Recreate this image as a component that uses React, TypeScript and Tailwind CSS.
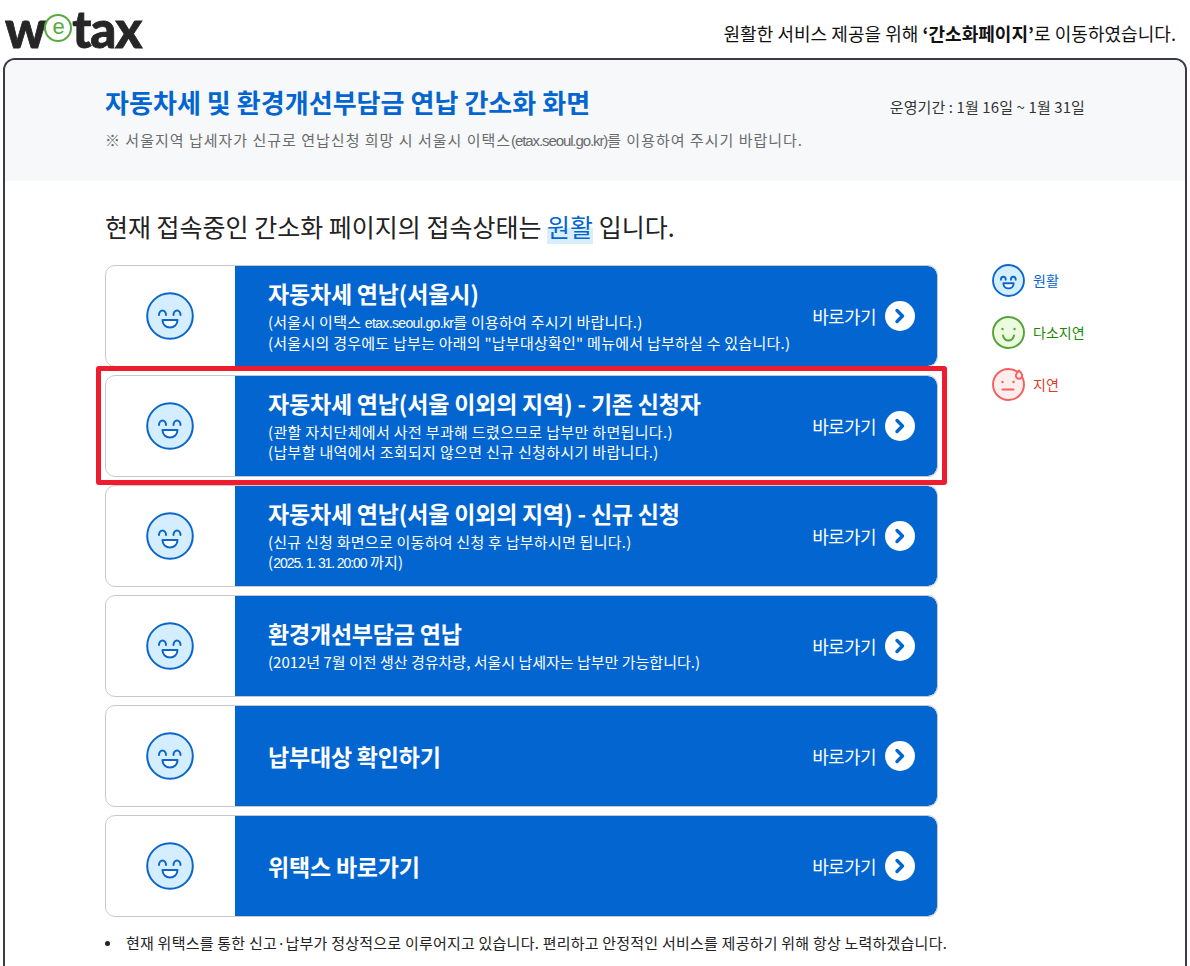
import React from "react";

const FONT = "font-['Noto_Sans_CJK_KR','Noto_Sans',sans-serif]";

function Smile({ size = 48 }: { size?: number }) {
  const sw = size < 40 ? 2.700 : 2;
  return (
    <svg width={size} height={size} viewBox="0 0 48 48" fill="none">
      <circle cx="24" cy="24" r={size < 40 ? 22.500 : 22.800} fill="#d4eeff" stroke="#0a66cc" strokeWidth={sw} />
      <path d="M13 23c0-2.500 1.500-4.500 3.500-4.500s3.500 2 3.500 4.500M27.500 23c0-2.500 1.500-4.500 3.500-4.500s3.500 2 3.500 4.500" stroke="#0a66cc" strokeWidth={sw} strokeLinecap="round" />
      <path d="M16.500 28h15c0 4.500-3.300 7.500-7.500 7.500s-7.500-3-7.500-7.500z" fill="#fff" stroke="#0a66cc" strokeWidth={sw} strokeLinejoin="round" />
    </svg>
  );
}

function Mild() {
  return (
    <svg width="33" height="33" viewBox="0 0 33 33" fill="none">
      <circle cx="16.500" cy="16.500" r="15.500" fill="#ecfbdf" stroke="#52a436" strokeWidth="1.900" />
      <circle cx="10.500" cy="13" r="1.200" fill="#52a436" />
      <circle cx="22.500" cy="13" r="1.200" fill="#52a436" />
      <path d="M11 19.500c.8 3.500 2.800 5 5.500 5s4.700-1.500 5.500-5" stroke="#52a436" strokeWidth="1.900" strokeLinecap="round" />
    </svg>
  );
}

function Delay() {
  return (
    <svg width="33" height="33" viewBox="0 0 33 33" fill="none">
      <circle cx="16.500" cy="16.500" r="15.500" fill="#ffecec" stroke="#f26060" strokeWidth="1.900" />
      <circle cx="10.500" cy="14" r="1.200" fill="#f26060" />
      <circle cx="21.500" cy="14" r="1.200" fill="#f26060" />
      <path d="M10.500 21.500h11" stroke="#f26060" strokeWidth="1.900" strokeLinecap="round" />
      <path d="M27 2.500c2 2 3.200 3.300 3.200 5a3.200 3.200 0 0 1-6.400 0c0-1.700 1.200-3 3.200-5z" fill="#ffecec" stroke="#f26060" strokeWidth="1.900" strokeLinejoin="round" />
    </svg>
  );
}

function Lat({ children, className = "tracking-[-0.65px]" }: { children: React.ReactNode; className?: string }) {
  return <span className={`font-['Liberation_Sans'] text-[14px] ${className}`}>{children}</span>;
}

function Row({ title, lines }: { title: string; lines: React.ReactNode[] }) {
  return (
    <a className="flex h-[102px] rounded-[10px] overflow-hidden bg-white border border-[#c9c9c9]">
      <div className="w-[129px] shrink-0 flex items-center justify-center pr-[2px]">
        <Smile />
      </div>
      <div className="flex-1 flex items-center bg-[#0366d0] text-white pl-[33px] pr-[22px] rounded-r-[9px]">
        <div className="flex-1 min-w-0">
          <div className={`text-[23px] leading-[30px] font-bold tracking-[-0.2px] ${lines.length ? "-translate-y-[2px] mb-[2px]" : ""}`}>{title}</div>
          {lines.map((l, i) => (
            <div key={i} className="text-[15px] leading-[20px] tracking-[0.25px] whitespace-nowrap">{l}</div>
          ))}
        </div>
        <div className="flex items-center gap-[9px] shrink-0">
          <span className="text-[18px] tracking-[-0.6px]">바로가기</span>
          <span className="w-[30px] h-[30px] rounded-full bg-white flex items-center justify-center">
            <svg width="14" height="16" viewBox="0 0 14 16" fill="none">
              <path d="M4 2.500 9.500 8 4 13.500" stroke="#0366d0" strokeWidth="3.400" strokeLinecap="round" strokeLinejoin="round" />
            </svg>
          </span>
        </div>
      </div>
    </a>
  );
}

const rows: { title: string; lines: React.ReactNode[] }[] = [
  { title: "자동차세 연납(서울시)", lines: [<>(서울시 이택스 <Lat>etax.seoul.go.kr</Lat>를 이용하여 주시기 바랍니다.)</>, "(서울시의 경우에도 납부는 아래의 \"납부대상확인\" 메뉴에서 납부하실 수 있습니다.)"] },
  { title: "자동차세 연납(서울 이외의 지역) - 기존 신청자", lines: [<span className="tracking-[0.33px]">(관할 자치단체에서 사전 부과해 드렸으므로 납부만 하면됩니다.)</span>, <span className="tracking-[0.33px]">(납부할 내역에서 조회되지 않으면 신규 신청하시기 바랍니다.)</span>] },
  { title: "자동차세 연납(서울 이외의 지역) - 신규 신청", lines: ["(신규 신청 화면으로 이동하여 신청 후 납부하시면 됩니다.)", <>(<Lat className="tracking-[-1.1px]">2025. 1. 31. 20:00</Lat> 까지)</>] },
  { title: "환경개선부담금 연납", lines: [<span className="tracking-[0px]">(2012년 7월 이전 생산 경유차량, 서울시 납세자는 납부만 가능합니다.)</span>] },
  { title: "납부대상 확인하기", lines: [] },
  { title: "위택스 바로가기", lines: [] },
];

export default function App() {
  return (
    <div className={`relative h-[966px] w-[1190px] overflow-hidden bg-white text-[#111] ${FONT}`}>
      <header className="h-[58px] flex justify-between pl-[5px] pr-[14px]">
        <div className="h-[58px] flex items-start font-['Lato'] font-black text-[#262626] text-[51px] leading-[58px] tracking-[-1.1px] [-webkit-text-stroke:0.8px_#262626]">
          <span>w</span>
          <svg width="30" height="30" viewBox="0 0 30 30" className="shrink-0 mt-[13px] -ml-[2px]">
            <circle cx="15" cy="15" r="13" fill="#fff" stroke="#57ac3c" strokeWidth="2" />
            <text x="15" y="21" textAnchor="middle" fontSize="22" fontWeight="400" fontFamily="Liberation Sans" fill="#57ac3c" style={{ WebkitTextStroke: "0" }}>e</text>
          </svg>
          <span className="-ml-[1px]">tax</span>
        </div>
        <p className="text-[18px] leading-[26px] mt-[20px] tracking-[0.05px] whitespace-nowrap">
          원활한 서비스 제공을 위해 <b className="font-bold">‘간소화페이지’</b>로 이동하였습니다.
        </p>
      </header>

      <main className="ml-[3px] w-[1184px] h-[1000px] border-2 border-[#3a3a48] rounded-[12px] overflow-hidden">
        <section className="h-[121px] bg-[#f7f8fa] pl-[100px] pr-[100px]">
          <div className="flex justify-between items-start pt-[24px]">
            <h1 className="text-[26px] leading-[36px] font-bold text-[#0366d0] tracking-[0.05px]">
              자동차세 및 환경개선부담금 연납 간소화 화면
            </h1>
            <span className="text-[15px] leading-[22px] mt-[12px] tracking-[0.1px] text-[#333]">
              운영기간 : 1월 16일 ~ 1월 31일
            </span>
          </div>
          <p className="text-[15px] leading-[22px] mt-[9px] text-[#6b6b6b] tracking-[1px] whitespace-nowrap">
            ※ 서울지역 납세자가 신규로 연납신청 희망 시 서울시 이택스<span className="font-['Liberation_Sans'] text-[15px] tracking-[-1.1px]">(etax.seoul.go.kr)</span>를 이용하여 주시기 바랍니다.
          </p>
        </section>

        <section className="pl-[100px] pt-[27px]">
          <p className="text-[25px] leading-[36px] text-[#222]">
            현재 접속중인 간소화 페이지의 접속상태는{" "}
            <span className="text-[#0366d0] bg-[linear-gradient(transparent_55%,#d9eefc_55%)]">원활</span> 입니다.
          </p>
          <div className="flex mt-[21px]">
            <div className="w-[833px] flex flex-col gap-[8px] shrink-0">
              {rows.map((r) => (
                <Row key={r.title} title={r.title} lines={r.lines} />
              ))}
            </div>
            <ul className="ml-[54px] -mt-[1px] flex flex-col gap-[19px] text-[14px]">
              <li className="flex items-center gap-[8px] text-[#0366d0]"><Smile size={33} /><span>원활</span></li>
              <li className="flex items-center gap-[8px] text-[#1a8a00]"><Mild /><span>다소지연</span></li>
              <li className="flex items-center gap-[8px] text-[#e03a1e]"><Delay /><span>지연</span></li>
            </ul>
          </div>
          <p className="flex items-center mt-[15px] text-[15px] leading-[22px] tracking-[0.22px] text-[#222] whitespace-nowrap">
            <span className="w-[5px] h-[5px] rounded-full bg-[#222] ml-[0px] mr-[16px] shrink-0" />
            현재 위택스를 통한 신고·납부가 정상적으로 이루어지고 있습니다. 편리하고 안정적인 서비스를 제공하기 위해 항상 노력하겠습니다.
          </p>
        </section>
      </main>

      <div className="absolute left-[96px] top-[366px] w-[851px] h-[119px] border-[5px] border-[#ee1c2e] rounded-[3px] pointer-events-none" />
    </div>
  );
}
